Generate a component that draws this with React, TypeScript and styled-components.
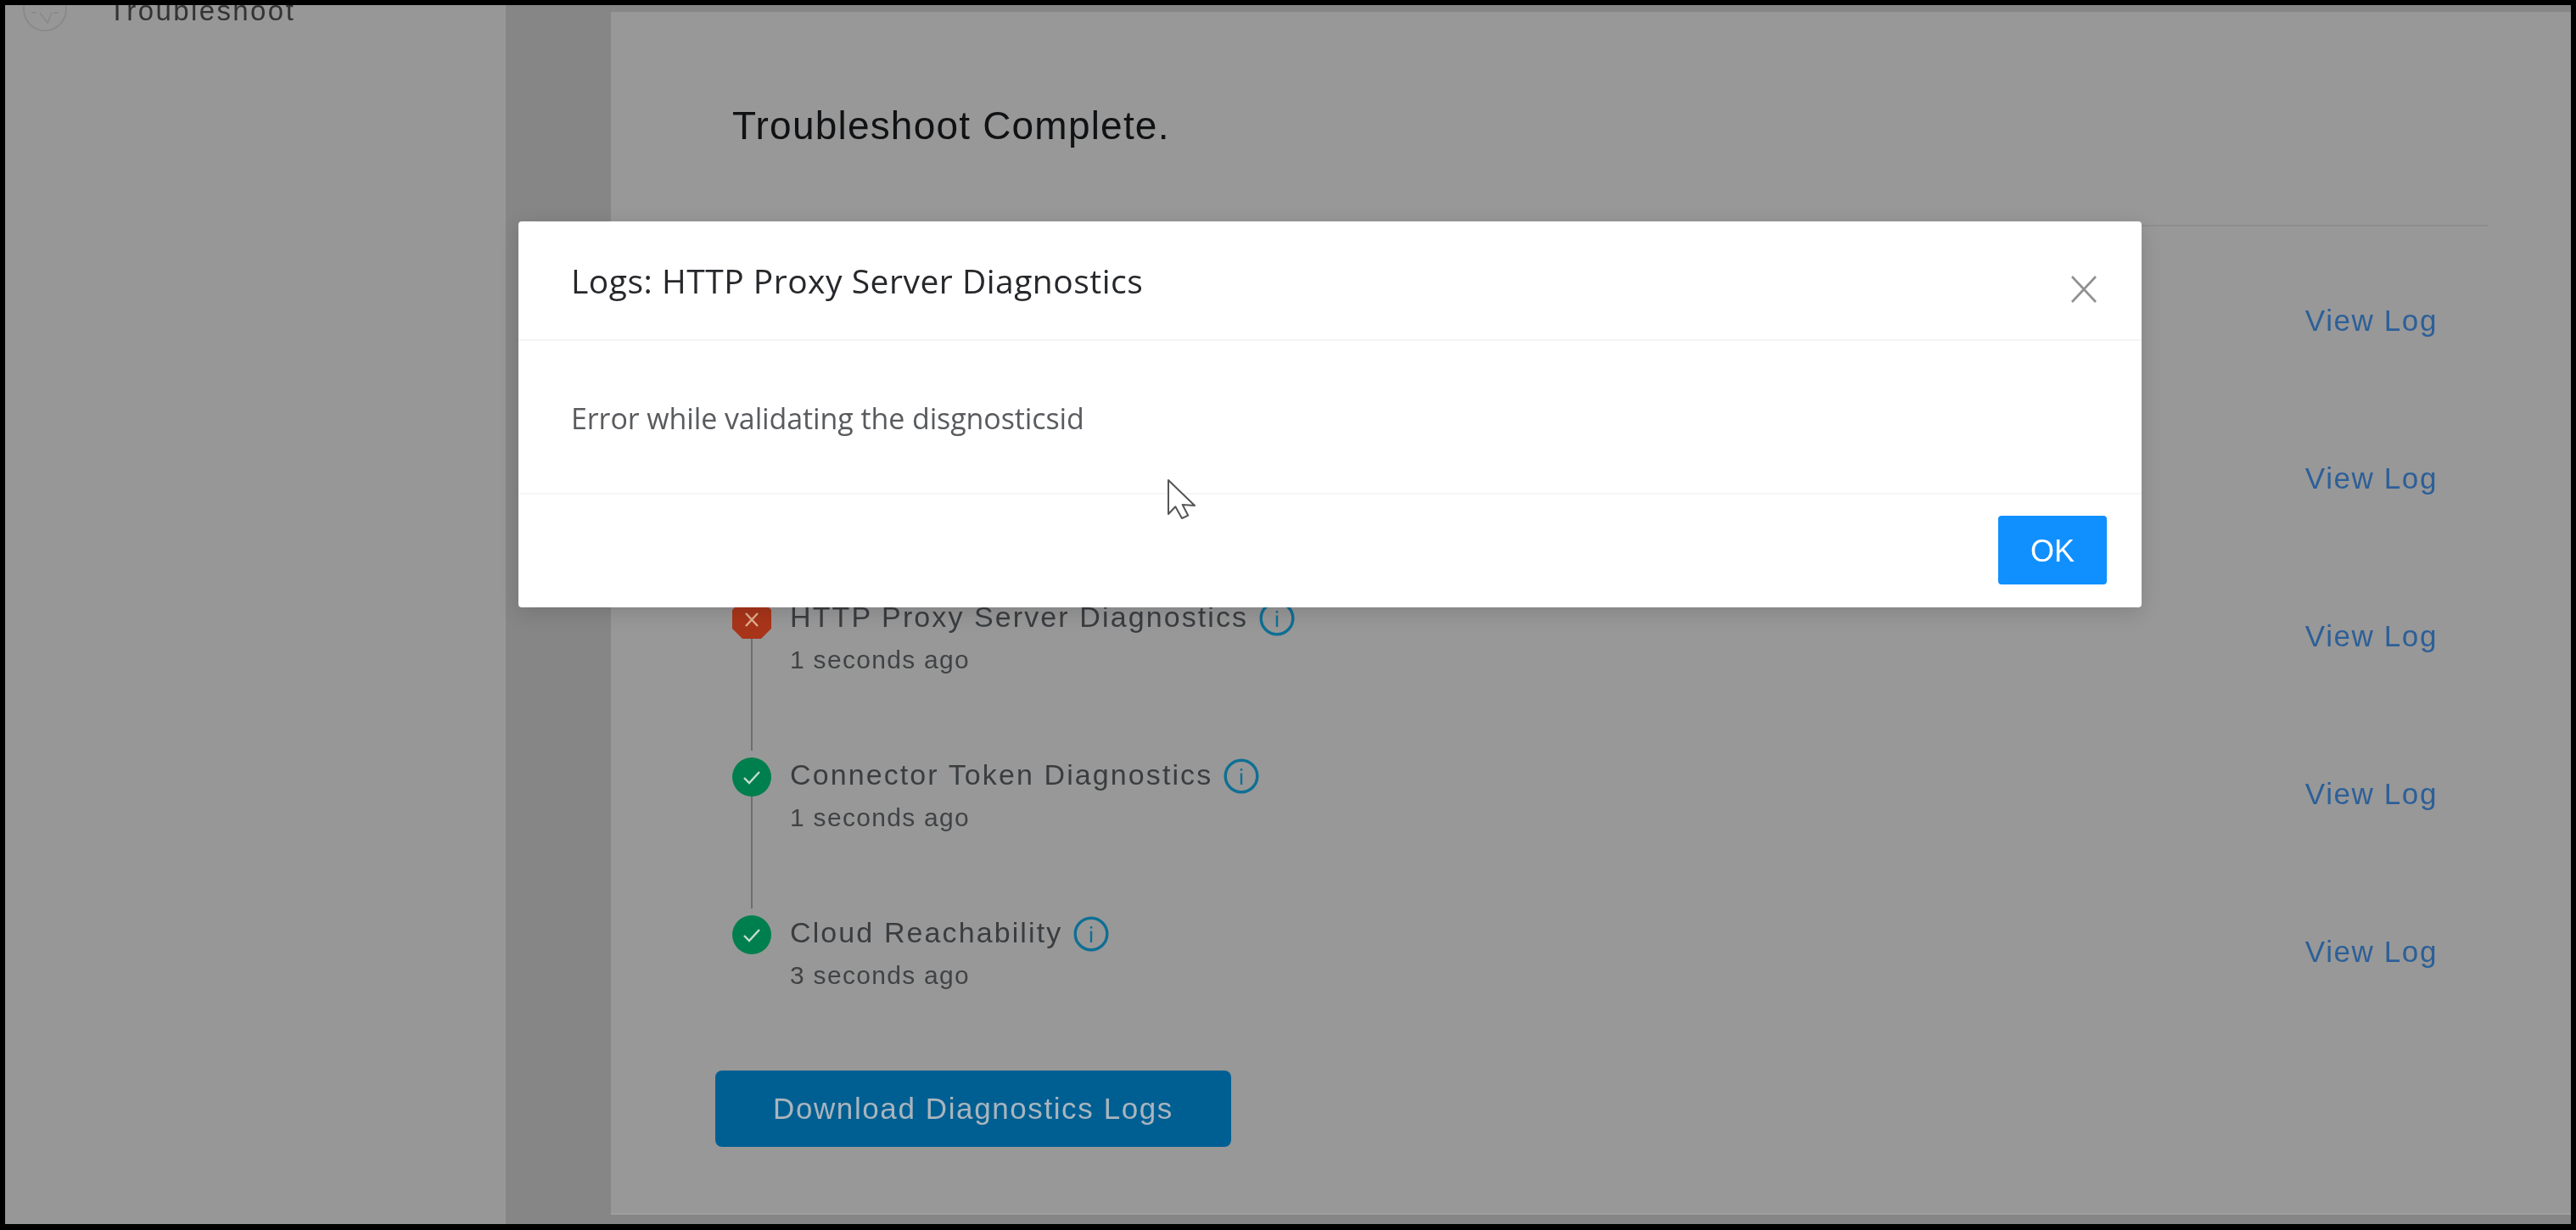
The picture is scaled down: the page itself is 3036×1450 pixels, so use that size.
import React from "react";
import styled, { createGlobalStyle } from "styled-components";

const Global = createGlobalStyle`
  html, body { margin: 0; padding: 0; background: #000; }
  body { width: 3036px; height: 1450px; overflow: hidden; font-family: "Liberation Sans", Arial, sans-serif; }
  * { box-sizing: border-box; }
`;

const Frame = styled.div`
  position: relative;
  width: 3024px;
  height: 1437px;
  margin: 6px 6px 7px 6px;
  display: flex;
  overflow: hidden;
  background: #868686;
  filter: blur(0.6px);
`;

const Sidebar = styled.aside`
  width: 590px;
  flex: none;
  background: #979797;
`;

const NavItem = styled.div`
  display: flex;
  align-items: center;
  gap: 49px;
  margin-top: -21px;
  padding-left: 21px;
  height: 51px;
`;

const NavLabel = styled.span`
  font-size: 33px;
  line-height: 40px;
  letter-spacing: 2.4px;
  padding-top: 4px;
  color: #333;
`;

const Gutter = styled.div`
  width: 124px;
  flex: none;
`;

const Main = styled.main`
  flex: 1;
  margin: 8px 0 11px;
  padding: 0 97px 0 123px;
  background: #989898;
  border-bottom: 2px solid #9f9f9f;
`;

const Header = styled.header`
  height: 253px;
  padding: 106px 0 0 20px;
  border-bottom: 2px solid #8d8d8d;
`;

const Heading = styled.h1`
  margin: 0;
  font-size: 46px;
  line-height: 56px;
  font-weight: 400;
  letter-spacing: 1.2px;
  color: #101214;
`;

const List = styled.div`
  padding: 68px 0 0 20px;
`;

const Row = styled.div`
  display: flex;
  height: 186px;
  padding-right: 60px;
  &:last-child { height: 183px; }
`;

const MarkerColumn = styled.div`
  width: 46px;
  flex: none;
  margin-right: 22px;
  display: flex;
  flex-direction: column;
  align-items: center;
`;

const Connector = styled.div`
  flex: 1;
  width: 1.5px;
  margin-bottom: 8px;
  background: #6e6e6e;
`;

const RowText = styled.div`
  flex: 1;
`;

const TitleLine = styled.div`
  display: flex;
  align-items: center;
  gap: 13px;
  height: 40px;
`;

const Title = styled.span`
  font-size: 34px;
  line-height: 40px;
  letter-spacing: 2.1px;
  color: #3a3d40;
`;

const Ago = styled.div`
  margin-top: 11px;
  font-size: 30px;
  line-height: 40px;
  letter-spacing: 1.3px;
  color: #404345;
`;

const ViewLog = styled.a`
  margin-top: 23px;
  height: 40px;
  font-size: 35px;
  line-height: 40px;
  letter-spacing: 1.6px;
  color: #2c5f98;
`;

const DownloadButton = styled.button`
  display: block;
  width: 608px;
  height: 90px;
  padding: 0;
  border: 0;
  border-radius: 8px;
  background: #005f92;
  color: #a9b5bd;
  font-family: "Liberation Sans", Arial, sans-serif;
  font-size: 35px;
  letter-spacing: 1.6px;
`;

const Modal = styled.section`
  position: absolute;
  left: 605px;
  top: 255px;
  width: 1913px;
  height: 455px;
  display: flex;
  flex-direction: column;
  background: #fff;
  border-radius: 4px;
  box-shadow: 0 6px 24px rgba(0, 0, 0, 0.14);
  font-family: "Open Sans", sans-serif;
`;

const ModalHeader = styled.div`
  height: 141px;
  flex: none;
  display: flex;
  justify-content: space-between;
  align-items: flex-start;
  padding: 43px 52px 0 62px;
  border-bottom: 2px solid #f4f4f4;
`;

const ModalTitle = styled.h2`
  margin: 0;
  font-size: 39px;
  line-height: 54px;
  font-weight: 500;
  letter-spacing: 0.5px;
  color: #26282b;
`;

const CloseButton = styled.button`
  width: 32px;
  height: 32px;
  margin-top: 21px;
  padding: 0;
  border: 0;
  background: none;
  color: #909090;
  display: flex;
`;

const ModalBody = styled.div`
  height: 181px;
  flex: none;
  padding: 67px 62px 0;
  border-bottom: 2px solid #f6f6f6;
  font-size: 34px;
  line-height: 48px;
  letter-spacing: -0.1px;
  color: #595b5e;
`;

const ModalFooter = styled.div`
  flex: 1;
  display: flex;
  justify-content: flex-end;
  align-items: flex-start;
  padding: 25px 41px 0 0;
`;

const OkButton = styled.button`
  width: 128px;
  height: 81px;
  padding: 3px 0 0;
  border: 0;
  border-radius: 4px;
  background: #1090ff;
  color: #fff;
  font-family: "Liberation Sans", Arial, sans-serif;
  font-size: 36px;
`;

const Pointer = styled.svg`
  position: absolute;
  left: 1369px;
  top: 558px;
  width: 35px;
  height: 50px;
`;

const MarkerSvg = styled.svg`
  display: block;
  flex: none;
  width: 46px;
  height: 46px;
`;

const InfoSvg = styled.svg`
  display: block;
  flex: none;
  width: 42px;
  height: 42px;
  margin-top: 4px;
`;

const Info = () => (
  <InfoSvg viewBox="0 0 42 42" fill="none">
    <circle cx="21" cy="21" r="18.8" stroke="#0e6f94" strokeWidth="3.4" />
    <rect x="19.8" y="17.5" width="2.4" height="13.5" fill="#0f7096" />
    <rect x="19.8" y="12" width="2.4" height="2.6" fill="#0f7096" />
  </InfoSvg>
);

const Marker = ({ failed }: { failed?: boolean }) =>
  failed ? (
    <MarkerSvg viewBox="0 0 46 46">
      <polygon points="12,0 34,0 46,12 46,34 34,46 12,46 0,34 0,12" fill="#a8351a" />
      <path d="M16 16 L30 31 M30 16 L16 31" stroke="#e3ae90" strokeWidth="2.4" fill="none" />
    </MarkerSvg>
  ) : (
    <MarkerSvg viewBox="0 0 46 46">
      <circle cx="23" cy="23" r="23" fill="#007f4e" />
      <path d="M14 24 L20 30 L32 17" stroke="#c4ded0" strokeWidth="2.4" fill="none" />
    </MarkerSvg>
  );

type Step = { title: string; ago: string; failed?: boolean };

const steps: Step[] = [
  { title: "", ago: "" },
  { title: "", ago: "" },
  { title: "HTTP Proxy Server Diagnostics", ago: "1 seconds ago", failed: true },
  { title: "Connector Token Diagnostics", ago: "1 seconds ago" },
  { title: "Cloud Reachability", ago: "3 seconds ago" },
];

export default function App() {
  return (
    <>
      <Global />
      <Frame>
        <Sidebar>
          <NavItem>
            <svg width="52" height="52" viewBox="0 0 52 52" fill="none">
              <circle cx="26" cy="26" r="25" stroke="#868686" strokeWidth="1.5" />
              <path d="M20 30 L29 42 L34 30 M10 30 H16 M36 30 H42" stroke="#888" strokeWidth="1.5" />
            </svg>
            <NavLabel>Troubleshoot</NavLabel>
          </NavItem>
        </Sidebar>
        <Gutter />
        <Main>
          <Header>
            <Heading>Troubleshoot Complete.</Heading>
          </Header>
          <List>
            {steps.map((step, i) => (
              <Row key={i}>
                <MarkerColumn>
                  <Marker failed={step.failed} />
                  {i < steps.length - 1 && <Connector />}
                </MarkerColumn>
                <RowText>
                  {step.title && (
                    <>
                      <TitleLine>
                        <Title>{step.title}</Title>
                        <Info />
                      </TitleLine>
                      <Ago>{step.ago}</Ago>
                    </>
                  )}
                </RowText>
                <ViewLog>View Log</ViewLog>
              </Row>
            ))}
          </List>
          <DownloadButton>Download Diagnostics Logs</DownloadButton>
        </Main>
        <Modal>
          <ModalHeader>
            <ModalTitle>Logs: HTTP Proxy Server Diagnostics</ModalTitle>
            <CloseButton aria-label="Close">
              <svg width="32" height="32" viewBox="0 0 32 32" fill="none">
                <path d="M2 1 L30 31 M30 1 L2 31" stroke="currentColor" strokeWidth="2.6" />
              </svg>
            </CloseButton>
          </ModalHeader>
          <ModalBody>Error while validating the disgnosticsid</ModalBody>
          <ModalFooter>
            <OkButton>OK</OkButton>
          </ModalFooter>
        </Modal>
        <Pointer viewBox="0 0 35 50">
          <path d="M2 2 L2 42 L10.3 33.3 L18 47 L25.3 43.7 L18.7 31 L33 32 Z" fill="#fff" stroke="#555" strokeWidth="2" strokeLinejoin="round" />
        </Pointer>
      </Frame>
    </>
  );
}
